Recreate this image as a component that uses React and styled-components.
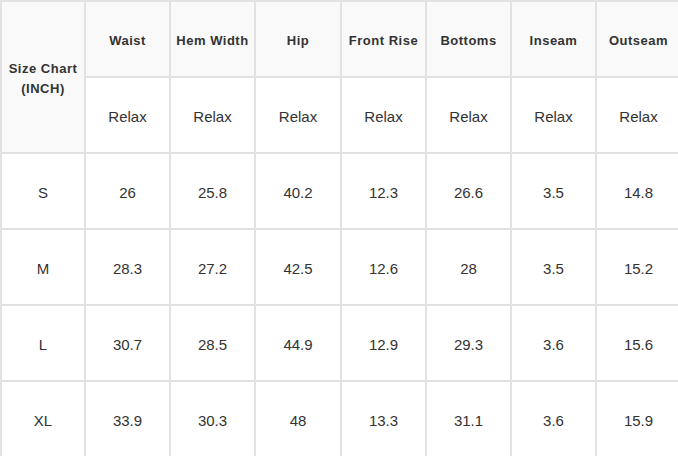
import React from "react";
import styled, { createGlobalStyle } from "styled-components";

const Global = createGlobalStyle`
  html, body { margin: 0; padding: 0; background: #fff; overflow: hidden; }
  body { font-family: "Liberation Sans", Arial, sans-serif; color: #333; }
`;

const Table = styled.table`
  border-collapse: separate;
  border-spacing: 2px;
  background: #e2e2e2;
  table-layout: fixed;
  width: 682px;
`;

const Row = styled.tr`
  height: 74px;
`;

const HeadCell = styled.th`
  box-sizing: border-box;
  background: #f9f9f9;
  font-weight: bold;
  font-size: 13px;
  letter-spacing: 0.5px;
  color: #333;
  text-align: center;
  vertical-align: middle;
  padding: 3px 0 0;
  height: 74px;
  line-height: 20px;
  white-space: nowrap;
`;

const Cell = styled.td`
  box-sizing: border-box;
  background: #fff;
  font-size: 15px;
  color: #333;
  text-align: center;
  vertical-align: middle;
  padding: 2px 0 0;
  height: 74px;
`;

const widths = [82, 83, 83, 84, 83, 83, 83, 83];
const headers = ["Waist", "Hem Width", "Hip", "Front Rise", "Bottoms", "Inseam", "Outseam"];
const rows = [
  ["S", "26", "25.8", "40.2", "12.3", "26.6", "3.5", "14.8"],
  ["M", "28.3", "27.2", "42.5", "12.6", "28", "3.5", "15.2"],
  ["L", "30.7", "28.5", "44.9", "12.9", "29.3", "3.6", "15.6"],
  ["XL", "33.9", "30.3", "48", "13.3", "31.1", "3.6", "15.9"],
];

export default function App() {
  return (
    <>
      <Global />
      <Table>
        <colgroup>
          {widths.map((w, i) => (
            <col key={i} style={{ width: w }} />
          ))}
        </colgroup>
        <tbody>
          <Row>
            <HeadCell rowSpan={2}>
              Size Chart
              <br />
              (INCH)
            </HeadCell>
            {headers.map((h) => (
              <HeadCell key={h}>{h}</HeadCell>
            ))}
          </Row>
          <Row>
            {headers.map((h) => (
              <Cell key={h}>Relax</Cell>
            ))}
          </Row>
          {rows.map((r) => (
            <Row key={r[0]}>
              {r.map((v, i) => (
                <Cell key={i}>{v}</Cell>
              ))}
            </Row>
          ))}
        </tbody>
      </Table>
    </>
  );
}
